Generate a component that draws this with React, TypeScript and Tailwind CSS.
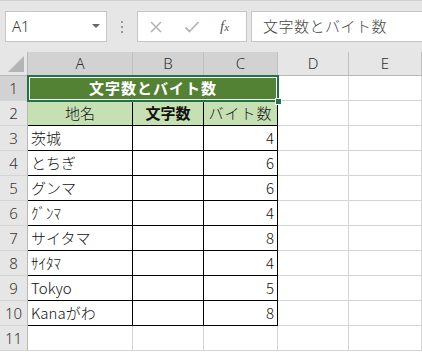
import React from "react";

const jp = { fontFamily: '"Noto Sans CJK JP", "Noto Sans", sans-serif' };
const ui = { fontFamily: '"Noto Sans", "Liberation Sans", sans-serif' };

const rows: [string, string, string][] = [
  ["茨城", "", "4"],
  ["とちぎ", "", "6"],
  ["グンマ", "", "6"],
  ["ｸﾞﾝﾏ", "", "4"],
  ["サイタマ", "", "8"],
  ["ｻｲﾀﾏ", "", "4"],
  ["Tokyo", "", "5"],
  ["Kanaがわ", "", "8"],
];

function RowHead({ n, sel }: { n: number; sel?: boolean }) {
  return (
    <div
      className={`flex items-center justify-center border-r border-b border-r-[#b8b8b8] border-b-[#d4d4d4] text-[15px] font-light text-[#333] ${sel ? "bg-[#d2d2d2]" : "bg-[#e6e6e6]"}`}
      style={ui}
    >
      {n}
    </div>
  );
}

function Blank({ dark }: { dark?: boolean }) {
  return <div className={`border-r border-b ${dark ? "border-black" : "border-[#d4d4d4]"} bg-white`} />;
}

export default function App() {
  return (
    <div className="w-[422px] h-[352px] overflow-hidden bg-white relative select-none">
      {/* toolbar */}
      <div className="h-[52px] bg-[#e6e6e6] border-t border-[#d0d0d0] flex items-start pt-[10px]">
        <div className="ml-[5px] w-[102px] h-[31px] bg-white border border-[#c6c6c6] flex items-center justify-between pl-[6px] pr-[6px]">
          <span className="text-[15px] font-light text-[#333]" style={ui}>A1</span>
          <span className="w-0 h-0 border-l-[4px] border-r-[4px] border-t-[4px] border-l-transparent border-r-transparent border-t-[#666] mb-[1px]" />
        </div>
        <div className="w-[30px] h-[31px] flex flex-col items-center justify-center gap-[3px]">
          <span className="w-[2px] h-[2px] bg-[#999]" />
          <span className="w-[2px] h-[2px] bg-[#999]" />
          <span className="w-[2px] h-[2px] bg-[#999]" />
        </div>
        <div className="w-[110px] h-[31px] bg-white border border-[#c6c6c6] flex items-center">
          <svg width="14" height="14" viewBox="0 0 14 14" className="ml-[11px]">
            <path d="M2 2 L12 12 M12 2 L2 12" stroke="#b5b5b5" strokeWidth="1.6" fill="none" />
          </svg>
          <svg width="16" height="14" viewBox="0 0 16 14" className="ml-[21px]">
            <path d="M1.5 7.5 L5.5 11.5 L14.5 2" stroke="#b5b5b5" strokeWidth="1.8" fill="none" />
          </svg>
          <span
            className="ml-[20px] text-[15px] italic text-[#555]"
            style={{ fontFamily: '"Liberation Serif", "DejaVu Serif", serif' }}
          >
            f<span className="text-[11px]">x</span>
          </span>
        </div>
        <div className="ml-[4px] flex-1 h-[31px] bg-white border border-[#c6c6c6] border-r-0 flex items-center pl-[11px]">
          <span className="text-[15px] font-light text-[#444] tracking-[0.5px]" style={jp}>文字数とバイト数</span>
        </div>
      </div>

      {/* grid */}
      <div className="grid grid-cols-[28px_105px_71px_74px_71px_73px] grid-rows-[24px_repeat(11,25px)]">
        {/* corner */}
        <div className="bg-[#e6e6e6] border-r border-b border-r-[#b8b8b8] border-b-[#b8b8b8] relative">
          <div
            className="absolute right-[3px] bottom-[3px] w-[16px] h-[16px] bg-[#b4b4b4]"
            style={{ clipPath: "polygon(100% 0, 100% 100%, 0 100%)" }}
          />
        </div>
        {["A", "B", "C", "D", "E"].map((c, i) => (
          <div
            key={c}
            className={`flex items-center justify-center border-r border-b border-r-[#c0c0c0] border-b-[#b8b8b8] text-[15px] font-light text-[#333] ${i < 3 ? "bg-[#d2d2d2]" : "bg-[#e6e6e6]"}`}
            style={ui}
          >
            {c}
          </div>
        ))}

        {/* row 1 */}
        <RowHead n={1} sel />
        <div
          className="col-span-3 bg-[#548235] flex items-center justify-center text-white font-bold text-[15px] tracking-[1px] border-b border-black"
          style={jp}
        >
          文字数とバイト数
        </div>
        <Blank />
        <Blank />

        {/* row 2 */}
        <RowHead n={2} />
        <div className="bg-[#c6e0b4] border-r border-b border-black flex items-center justify-center text-[15px] font-light text-[#111]" style={jp}>
          地名
        </div>
        <div className="bg-[#c6e0b4] border-r border-b border-black flex items-center justify-center text-[15px] font-bold text-[#111]" style={jp}>
          文字数
        </div>
        <div className="bg-[#c6e0b4] border-r border-b border-black flex items-center justify-center text-[15px] font-light text-[#111] tracking-[1px]" style={jp}>
          バイト数
        </div>
        <Blank />
        <Blank />

        {rows.map((r, i) => (
          <React.Fragment key={i}>
            <RowHead n={i + 3} />
            <div className="bg-white border-r border-b border-black flex items-center pl-[3px] text-[15px] font-light text-[#111] whitespace-nowrap" style={jp}>
              {r[0]}
            </div>
            <div className="bg-white border-r border-b border-black" />
            <div className="bg-white border-r border-b border-black flex items-center justify-end pr-[3px] text-[15px] font-light text-[#111]" style={jp}>
              {r[2]}
            </div>
            <Blank />
            <Blank />
          </React.Fragment>
        ))}

        {/* row 11 */}
        <RowHead n={11} />
        <Blank />
        <Blank />
        <Blank />
        <Blank />
        <Blank />
      </div>

      {/* selection overlay */}
      <div className="absolute left-[27px] top-[75px] w-[252px] h-[27px] border-2 border-[#217346] pointer-events-none shadow-[inset_0_0_0_1px_#ffffff]" />
      <div className="absolute left-[275px] top-[98px] w-[7px] h-[7px] bg-[#217346] border border-white pointer-events-none" />
    </div>
  );
}
